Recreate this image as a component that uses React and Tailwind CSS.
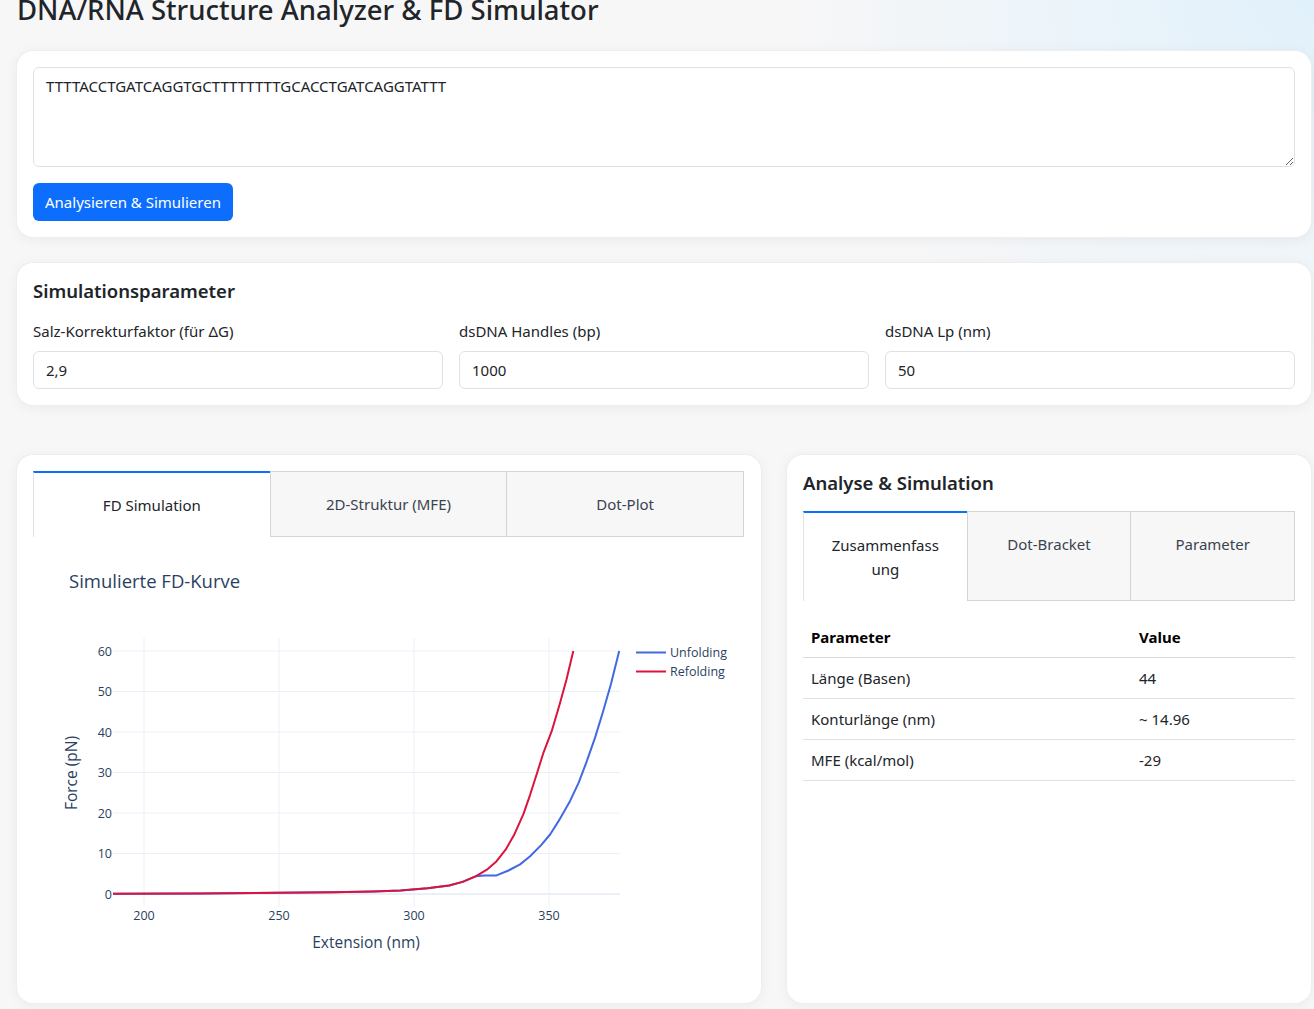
import React from 'react';

const FONT = { fontFamily: '"Noto Sans", "Open Sans", sans-serif' };

// chart mapping (svg origin sits at page x=33, y=536)
const X = (nm) => 111 + (nm - 200) * 2.7;
const Y = (f) => 357 - f * 4.05;

const shared = [
  [188.5, 0.05], [220, 0.15], [250, 0.3], [270, 0.45], [285, 0.65], [295, 0.9],
  [305, 1.4], [313, 2.1], [318, 3], [323, 4.4],
];
const refolding = [
  ...shared,
  [327, 6], [330.6, 8.1], [334, 11], [337, 14.5], [340.5, 19.7], [343, 24.5],
  [345.4, 29.5], [348, 35], [351, 40.2], [354, 47], [356.5, 53], [359, 60],
];
const unfolding = [
  ...shared,
  [326, 4.6], [330.6, 4.6], [335, 5.8], [339.3, 7.3], [343, 9.3], [347, 12],
  [350.4, 14.7], [354, 18.5], [357.8, 23], [361, 27.5], [364, 32.8], [367, 38.5],
  [370, 45], [373, 52], [376, 60],
];
const toPath = (pts) => pts.map(([x, f], i) => `${i ? 'L' : 'M'}${X(x).toFixed(1)},${Y(f).toFixed(1)}`).join(' ');

function FdChart() {
  const tick = { fontFamily: '"Open Sans", verdana, arial, sans-serif', fontSize: 12.5, fill: '#2a3f5f' };
  return (
    <svg width="711" height="451" className="block">
      <text x="36" y="51" style={{ ...tick, fontSize: 18.5 }}>Simulierte FD-Kurve</text>

      {/* grid */}
      {[200, 250, 300, 350].map((v) => (
        <line key={v} x1={X(v)} x2={X(v)} y1="101" y2="370" stroke="#ebf0f8" strokeWidth="1" />
      ))}
      {[10, 20, 30, 40, 50, 60].map((v) => (
        <line key={v} x1="80" x2="587" y1={Y(v)} y2={Y(v)} stroke="#ebf0f8" strokeWidth="1" />
      ))}
      <line x1="80" x2="587" y1={Y(0)} y2={Y(0)} stroke="#ebf0f8" strokeWidth="2" />

      {/* traces */}
      <path d={toPath(unfolding)} fill="none" stroke="#4169e1" strokeWidth="2" strokeLinejoin="round" />
      <path d={toPath(refolding)} fill="none" stroke="#dc143c" strokeWidth="2" strokeLinejoin="round" />

      {/* tick labels */}
      {[0, 10, 20, 30, 40, 50, 60].map((v) => (
        <text key={v} x="79" y={Y(v) + 4.5} textAnchor="end" style={tick}>{v}</text>
      ))}
      {[200, 250, 300, 350].map((v) => (
        <text key={v} x={X(v)} y="383" textAnchor="middle" style={tick}>{v}</text>
      ))}

      <text x="333" y="411" textAnchor="middle" style={{ ...tick, fontSize: 15.5 }}>Extension (nm)</text>
      <text transform="translate(44 236) rotate(-90)" textAnchor="middle" style={{ ...tick, fontSize: 15.5 }}>Force (pN)</text>

      {/* legend */}
      <line x1="603" x2="633" y1="115.5" y2="115.5" stroke="#4169e1" strokeWidth="2" />
      <text x="637" y="120" style={tick}>Unfolding</text>
      <line x1="603" x2="633" y1="134.5" y2="134.5" stroke="#dc143c" strokeWidth="2" />
      <text x="637" y="139" style={tick}>Refolding</text>
    </svg>
  );
}

function Tab({ active, children }) {
  return (
    <div
      className={`flex-1 px-4 py-5 text-center leading-6 border-l ${
        active
          ? 'bg-white border-t-2 border-t-[#0d6efd] border-l-[#e3e3e3] text-[#212529]'
          : 'bg-[#f7f7f7] border-t border-b border-[#d4d4d4] text-[#3b4350]'
      }`}
    >
      {children}
    </div>
  );
}

function Card({ className = '', children }) {
  return (
    <div className={`bg-white rounded-2xl shadow-[0_0_0_1px_#eeeeee,0_2px_14px_rgba(0,0,0,0.06)] p-4 ${className}`}>
      {children}
    </div>
  );
}

function Field({ label, value }) {
  return (
    <div className="flex-1">
      <div className="leading-6 mb-2">{label}</div>
      <input
        defaultValue={value}
        className="w-full h-[38px] px-3 rounded-md border border-[#dee2e6] bg-white outline-none"
      />
    </div>
  );
}

export default function App() {
  return (
    <div
      className="min-h-[1009px] bg-[#f7f7f8] bg-[radial-gradient(ellipse_at_top_right,#e1f1fb_0%,rgba(247,247,248,0)_28%)] text-[15px] text-[#212529] pl-[17px] overflow-hidden"
      style={FONT}
    >
      <div className="w-[1294px]">
        <h1 className="text-[27.5px] font-medium leading-[34px] mt-[-7px] mb-[24px]">
          DNA/RNA Structure Analyzer &amp; FD Simulator
        </h1>

        <Card>
          <textarea
            defaultValue="TTTTACCTGATCAGGTGCTTTTTTTTGCACCTGATCAGGTATTT"
            className="block w-full h-[100px] px-3 py-1.5 rounded-md border border-[#dee2e6] bg-white resize-y outline-none leading-6"
          />
          <button className="mt-4 h-[38px] px-3 rounded-md bg-[#0d6efd] text-white leading-6">
            Analysieren &amp; Simulieren
          </button>
        </Card>

        <Card className="mt-[26px]">
          <h2 className="text-[18.5px] font-semibold leading-6 mb-4">Simulationsparameter</h2>
          <div className="flex gap-4">
            <Field label="Salz-Korrekturfaktor (für ΔG)" value="2,9" />
            <Field label="dsDNA Handles (bp)" value="1000" />
            <Field label="dsDNA Lp (nm)" value="50" />
          </div>
        </Card>

        <div className="flex gap-[26px] mt-[50px]">
          <Card className="w-[744px] h-[548px]">
            <div className="flex border-r border-[#d4d4d4] w-[711px]">
              <Tab active>FD Simulation</Tab>
              <Tab>2D-Struktur (MFE)</Tab>
              <Tab>Dot-Plot</Tab>
            </div>
            <FdChart />
          </Card>

          <Card className="w-[524px] h-[548px]">
            <h2 className="text-[18.5px] font-semibold leading-6 mb-4">Analyse &amp; Simulation</h2>
            <div className="flex border-r border-[#d4d4d4]">
              <Tab active>Zusammenfass<br />ung</Tab>
              <Tab>Dot-Bracket</Tab>
              <Tab>Parameter</Tab>
            </div>
            <table className="w-full mt-4 text-left">
              <thead>
                <tr className="border-b border-[#d9d9d9]">
                  <th className="w-[328px] px-2 py-2 font-bold leading-6 text-black">Parameter</th>
                  <th className="px-2 py-2 font-bold leading-6 text-black">Value</th>
                </tr>
              </thead>
              <tbody>
                {[
                  ['Länge (Basen)', '44'],
                  ['Konturlänge (nm)', '~ 14.96'],
                  ['MFE (kcal/mol)', '-29'],
                ].map(([k, v]) => (
                  <tr key={k} className="border-b border-[#dee2e6]">
                    <td className="px-2 py-2 leading-6">{k}</td>
                    <td className="px-2 py-2 leading-6">{v}</td>
                  </tr>
                ))}
              </tbody>
            </table>
          </Card>
        </div>
      </div>
    </div>
  );
}
